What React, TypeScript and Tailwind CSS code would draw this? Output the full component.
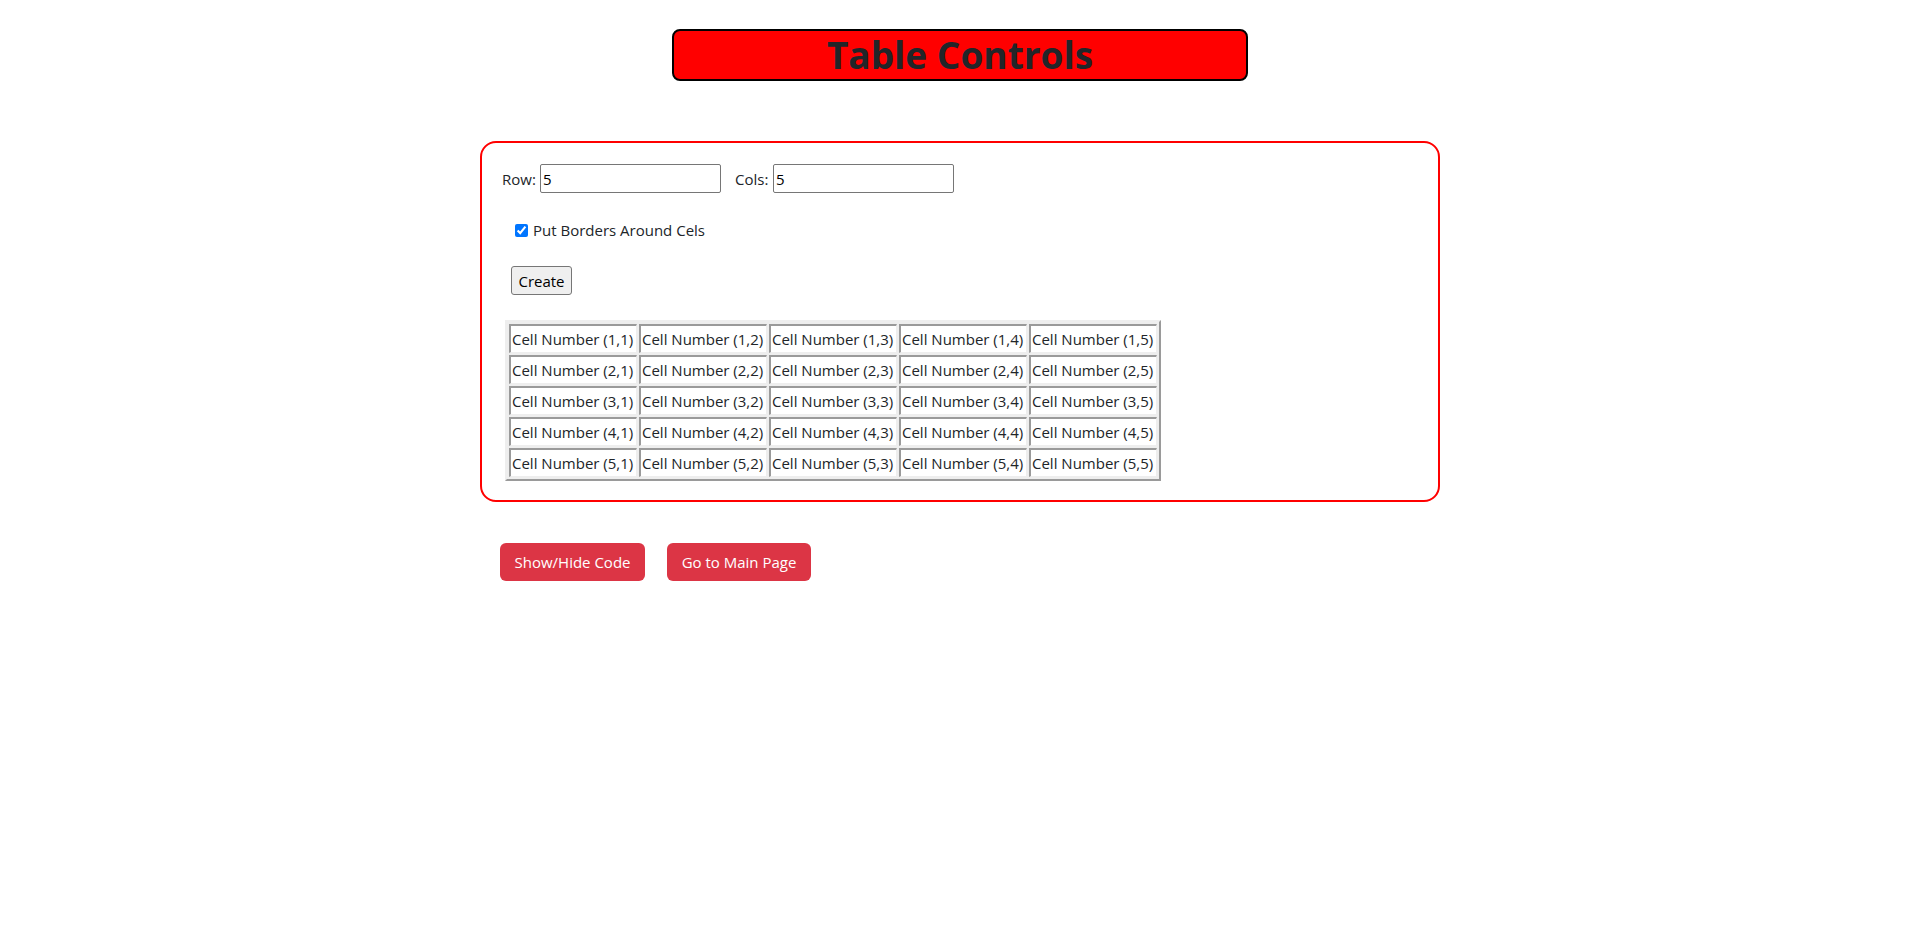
const rows = [1, 2, 3, 4, 5];
const cols = [1, 2, 3, 4, 5];

// 표 셀 하나
const Cell = ({ r, c }: { r: number; c: number }) => (
  <td className="border-t-2 border-l-2 border-r border-b border-t-[#9a9a9a] border-l-[#9a9a9a] border-r-[#eeeeee] border-b-[#eeeeee] bg-white p-px align-middle">
    <div className="w-[123px] whitespace-nowrap leading-6">
      Cell Number ({r},{c})
    </div>
  </td>
);

export default function App() {
  return (
    <div className="min-h-screen bg-white font-['Segoe_UI','Open_Sans',sans-serif] text-[15px] leading-6 text-[#212529]">
      <h1 className="mx-auto mt-[29px] w-[30%] rounded-lg border-2 border-black bg-[#ff0000] text-center text-[37px] font-bold leading-[48px] text-[#212529]">
        Table Controls
      </h1>

      <section className="mx-auto mt-[60px] flex w-1/2 flex-col items-start rounded-2xl border-2 border-[#ff0000] px-5 pb-[19px] pt-[21px]">
        <div className="flex h-[29px] items-center">
          <span className="w-[38px]">Row:</span>
          <input
            className="h-[29px] w-[181px] rounded-[2px] border border-[#767676] px-[2px] text-black"
            defaultValue="5"
          />
          <span className="ml-[14px] w-[38px]">Cols:</span>
          <input
            className="h-[29px] w-[181px] rounded-[2px] border border-[#767676] px-[2px] text-black"
            defaultValue="5"
          />
        </div>

        <label className="mt-[25px] flex h-6 items-center gap-[5px] pl-[13px]">
          <input type="checkbox" defaultChecked className="h-[13px] w-[13px] accent-[#0075ff]" />
          <span>Put Borders Around Cels</span>
        </label>

        <button className="ml-[9px] mt-6 h-[29px] w-[61px] rounded-[3px] border border-[#767676] bg-[#efefef] text-black">
          Create
        </button>

        <table className="ml-[3px] mt-[25px] border-separate border-spacing-[2px] border-2 border-t-[#eeeeee] border-l-[#eeeeee] border-r-[#9a9a9a] border-b-[#9a9a9a] bg-[#eeeeee]">
          <tbody>
            {rows.map((r) => (
              <tr key={r}>
                {cols.map((c) => (
                  <Cell key={c} r={r} c={c} />
                ))}
              </tr>
            ))}
          </tbody>
        </table>
      </section>

      <div className="mx-auto mt-[41px] flex w-1/2 gap-[22px] pl-5">
        <button className="h-[38px] w-[145px] rounded-md bg-[#dc3545] text-white">
          Show/Hide Code
        </button>
        <button className="h-[38px] w-[144px] rounded-md bg-[#dc3545] text-white">
          Go to Main Page
        </button>
      </div>
    </div>
  );
}
